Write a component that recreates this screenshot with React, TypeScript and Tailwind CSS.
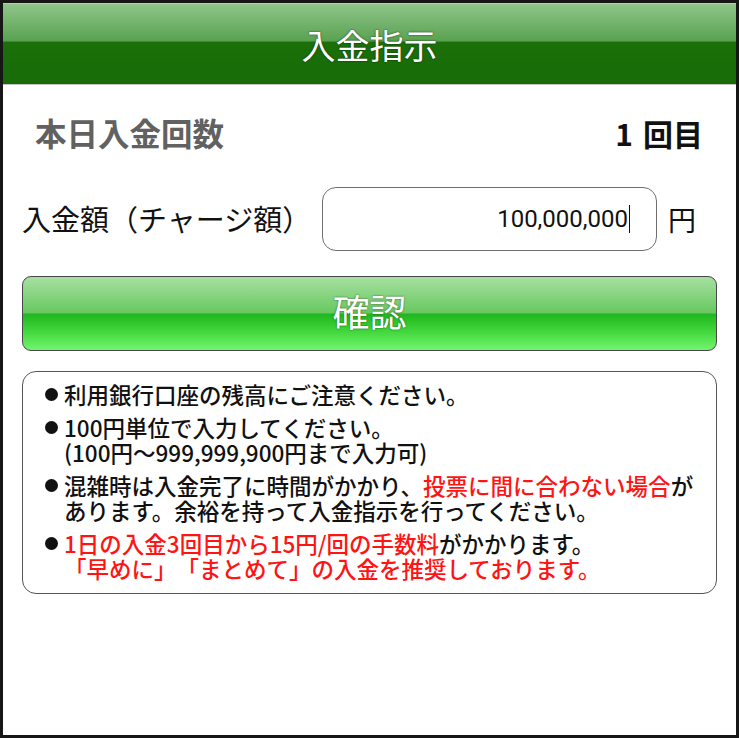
export default function App() {
  return (
    <div className="h-[738px] w-[739px] overflow-hidden border-[3px] border-[#161616] bg-white font-['Noto_Sans_CJK_JP',sans-serif] text-[#111] [text-spacing-trim:space-all]">
      <header className="flex h-[82px] items-center justify-center border-y border-[#c4c4c4] bg-[linear-gradient(to_bottom,#8fc589_0%,#5aa252_46%,#1b700a_48%,#186b07_100%)]">
        <h1 className="text-[34px] font-normal text-white [text-shadow:0_0_2px_rgba(0,0,0,0.7)]">入金指示</h1>
      </header>

      <div className="px-[19px]">
        <div className="mt-[20px] flex h-[56px] items-center justify-between pl-[13px] pr-[14px]">
          <span className="text-[31.5px] font-bold text-[#616161]">本日入金回数</span>
          <span className="text-[30px] font-bold text-[#111]">
            1<span className="ml-[10px]">回目</span>
          </span>
        </div>

        <div className="mt-[26px] flex h-[64px] items-center">
          <span className="w-[300px] shrink-0 text-[29px] whitespace-nowrap">入金額（チャージ額）</span>
          <div className="flex h-[64px] w-[335px] items-center justify-end rounded-[14px] border border-[#6f6f6f] pr-[26px] font-['Roboto',sans-serif] text-[24px]">
            100,000,000
            <span className="ml-[1px] h-[28px] border-l border-[#111]" />
          </div>
          <span className="ml-[11px] text-[28px]">円</span>
        </div>

        <button className="mt-[25px] flex h-[75px] w-full items-center justify-center rounded-[9px] border-[1.5px] border-[#474747] bg-[linear-gradient(to_bottom,#a7e0a2_0%,#68c85f_49%,#1fb71f_51%,#42d83d_75%,#74f470_100%)]">
          <span className="-mt-[4px] text-[37px] text-white [text-shadow:0_0_2px_rgba(0,0,0,0.6)]">確認</span>
        </button>

        <div className="mt-[20px] rounded-[14px] border border-[#555] pb-[12px] pl-[22px] pt-[10px] text-[22.5px] font-medium leading-[25px] whitespace-nowrap">
          <Note>利用銀行口座の残高にご注意ください。</Note>
          <Note>
            100円単位で入力してください。
            <br />
            (100円〜999,999,900円まで入力可)
          </Note>
          <Note>
            混雑時は入金完了に時間がかかり、<span className="text-[#ff1414]">投票に間に合わない場合</span>が
            <br />
            あります。余裕を持って入金指示を行ってください。
          </Note>
          <Note>
            <span className="text-[#ff1414]">1日の入金3回目から15円/回の手数料</span>がかかります。
            <br />
            <span className="text-[#ff1414]">「早めに」「まとめて」の入金を推奨しております。</span>
          </Note>
        </div>
      </div>
    </div>
  );
}

function Note({ children }: { children: React.ReactNode }) {
  return (
    <div className="mt-[8px] flex first:mt-0">
      <span className="flex h-[25px] w-[19px] shrink-0 items-center">
        <span className="h-[13px] w-[13px] rounded-full bg-[#111]" />
      </span>
      <div>{children}</div>
    </div>
  );
}
